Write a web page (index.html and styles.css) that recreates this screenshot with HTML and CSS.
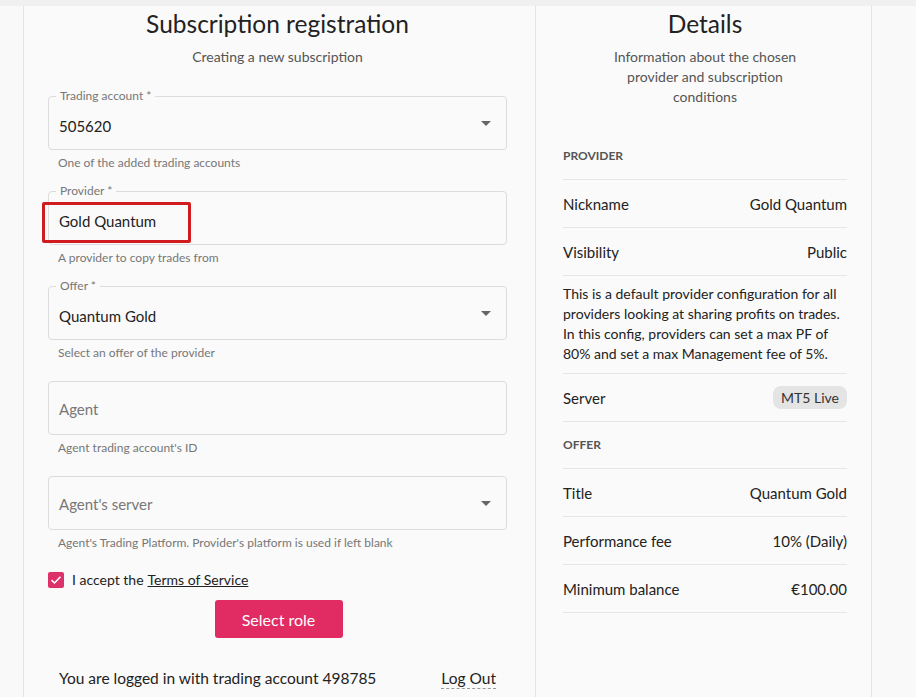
FILE: index.html
```html
<!DOCTYPE html>
<html lang="en">
<head>
    <meta charset="UTF-8">
    <meta name="viewport" content="width=device-width, initial-scale=1.0">
    <title>Subscription registration</title>
    <link rel="stylesheet" href="styles.css">
</head>
<body>
    <div class="top-strip"></div>

    <div class="page">
        <!-- Registration form -->
        <div class="card form-card">
            <h1>Subscription registration</h1>
            <p class="subtitle">Creating a new subscription</p>

            <div class="field">
                <span class="field-label">Trading account *</span>
                <span class="field-value">505620</span>
                <span class="arrow"></span>
            </div>
            <p class="helper">One of the added trading accounts</p>

            <div class="field">
                <span class="field-label">Provider *</span>
                <span class="field-value">Gold Quantum</span>
                <span class="highlight"></span>
            </div>
            <p class="helper">A provider to copy trades from</p>

            <div class="field">
                <span class="field-label">Offer *</span>
                <span class="field-value">Quantum Gold</span>
                <span class="arrow"></span>
            </div>
            <p class="helper">Select an offer of the provider</p>

            <div class="field">
                <span class="field-value placeholder">Agent</span>
            </div>
            <p class="helper">Agent trading account's ID</p>

            <div class="field">
                <span class="field-value placeholder">Agent's server</span>
                <span class="arrow"></span>
            </div>
            <p class="helper">Agent's Trading Platform. Provider's platform is used if left blank</p>

            <label class="accept">
                <span class="checkbox">
                    <svg width="12" height="10" viewBox="0 0 12 10"><path d="M1.5 5.2 L4.5 8 L10.5 1.8" fill="none" stroke="#fff" stroke-width="1.6"/></svg>
                </span>
                I accept the <a href="#">Terms of Service</a>
            </label>

            <div class="actions">
                <button class="select-button">Select role</button>
            </div>

            <div class="logged">
                <span>You are logged in with trading account 498785</span>
                <a href="#" class="logout">Log Out</a>
            </div>
        </div>

        <!-- Details of provider and offer -->
        <div class="card details-card">
            <h1>Details</h1>
            <p class="subtitle narrow">Information about the chosen provider and subscription conditions</p>

            <div class="section-head first">PROVIDER</div>
            <div class="row"><span>Nickname</span><span>Gold Quantum</span></div>
            <div class="row"><span>Visibility</span><span>Public</span></div>
            <div class="row description">This is a default provider configuration for all providers looking at sharing profits on trades. In this config, providers can set a max PF of 80% and set a max Management fee of 5%.</div>
            <div class="row"><span>Server</span><span class="badge">MT5 Live</span></div>

            <div class="section-head">OFFER</div>
            <div class="row"><span>Title</span><span>Quantum Gold</span></div>
            <div class="row"><span>Performance fee</span><span>10% (Daily)</span></div>
            <div class="row"><span>Minimum balance</span><span>€100.00</span></div>
        </div>

        <div class="rest"></div>
    </div>
</body>
</html>
```

FILE: styles.css
```css
body {
    margin: 0;
    font-family: Lato, "Open Sans", sans-serif;
    background-color: #f9f9f9;
    color: #2a2a2a;
    height: 697px;
    overflow: hidden;
}
.top-strip {
    height: 6px;
    background-color: #f0f0f0;
}
.page {
    display: flex;
    height: 691px;
    padding-left: 23px;
}
.card {
    background-color: #fafafa;
    border-left: 1px solid #e4e4e4;
    padding-top: 2px;
}
.form-card {
    width: 459px;
    padding-left: 24px;
    padding-right: 28px;
}
.details-card {
    width: 284px;
    padding-left: 27px;
    padding-right: 24px;
}
.rest {
    flex: 1;
    border-left: 1px solid #e4e4e4;
    background-color: #f9f9f9;
}
h1 {
    margin: 0;
    font-size: 24.5px;
    font-weight: 400;
    line-height: 32px;
    text-align: center;
    color: #222;
}
.subtitle {
    margin: 7px 0 0;
    font-size: 14px;
    line-height: 20px;
    color: #555;
    text-align: center;
}
.subtitle.narrow {
    max-width: 200px;
    margin-left: auto;
    margin-right: auto;
}

/* outlined fields */
.field {
    position: relative;
    border: 1px solid #dcdcdc;
    border-radius: 4px;
    margin-top: 20px;
    display: flex;
    align-items: center;
    padding: 6px 10px 0;
    box-sizing: border-box;
    height: 54px;
}
.form-card .subtitle + .field {
    margin-top: 29px;
}
.field-label {
    position: absolute;
    top: -8px;
    left: 7px;
    padding: 0 4px;
    font-size: 12px;
    line-height: 14px;
    color: #777;
    background-color: #fafafa;
}
.field-value {
    font-size: 15px;
    color: #222;
}
.field-value.placeholder {
    color: #777;
    margin-top: -4px;
}
.arrow {
    position: absolute;
    right: 15px;
    top: 24px;
    border-left: 5px solid transparent;
    border-right: 5px solid transparent;
    border-top: 5px solid #666;
}
.highlight {
    position: absolute;
    left: -7px;
    top: 10px;
    width: 143px;
    height: 35px;
    border: 3px solid #d01c1f;
    border-radius: 2px;
}
.helper {
    margin: 5px 0 0 10px;
    font-size: 12px;
    line-height: 16px;
    color: #777;
}

.accept {
    display: flex;
    align-items: center;
    margin-top: 19px;
    font-size: 14px;
    line-height: 20px;
    color: #222;
}
.checkbox {
    width: 16px;
    height: 16px;
    border-radius: 2px;
    background-color: #dd3169;
    display: flex;
    align-items: center;
    justify-content: center;
    margin-right: 8px;
}
.accept a {
    color: #222;
    margin-left: 4px;
}
.actions {
    display: flex;
    justify-content: center;
    margin-top: 10px;
}
.select-button {
    width: 128px;
    height: 38px;
    border: none;
    border-radius: 3px;
    background-color: #e02b63;
    color: #fff;
    font-family: inherit;
    font-size: 16px;
    margin-left: 2px;
}
.logged {
    display: flex;
    justify-content: space-between;
    margin-top: 30px;
    padding: 0 11px;
    font-size: 15.5px;
    line-height: 20px;
    color: #222;
}
.logout {
    color: #222;
    text-decoration: none;
    border-bottom: 1px dashed #999;
}

/* details list */
.section-head {
    font-size: 12px;
    font-weight: 700;
    line-height: 16px;
    color: #555;
    padding: 15px 0 15px;
    border-bottom: 1px solid #e6e6e6;
}
.section-head.first {
    margin-top: 26px;
}
.row {
    display: flex;
    justify-content: space-between;
    align-items: center;
    height: 47px;
    border-bottom: 1px solid #e6e6e6;
    font-size: 15px;
    color: #222;
}
.row.description {
    display: block;
    height: auto;
    padding: 8px 0 9px;
    font-size: 14px;
    line-height: 20px;
}
.badge {
    font-size: 14px;
    background-color: #e4e4e4;
    border-radius: 8px;
    padding: 2px 8px;
    line-height: 19px;
    color: #333;
}
```
